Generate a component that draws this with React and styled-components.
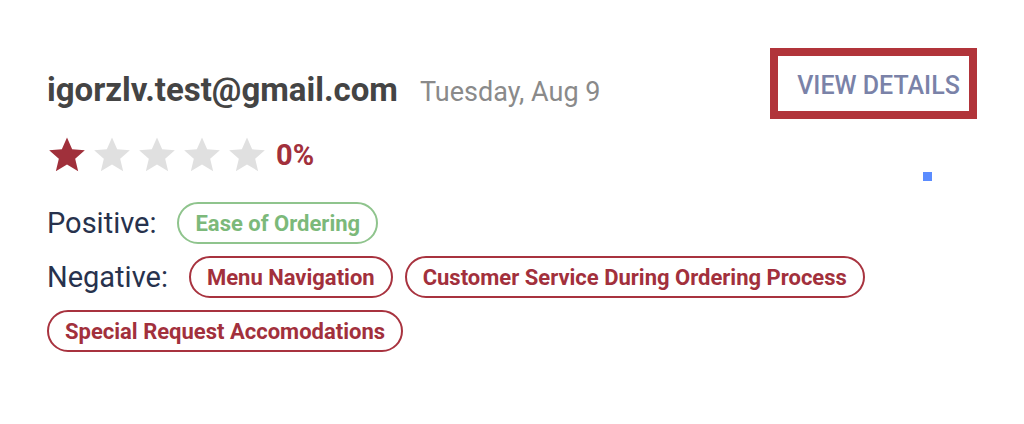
import React from "react"
import styled, { createGlobalStyle } from "styled-components"

const GlobalStyle = createGlobalStyle`
  body {
    margin: 0;
    background: #ffffff;
    font-family: Roboto, "Noto Sans", sans-serif;
  }
`

const Card = styled.div`
  position: relative;
  box-sizing: border-box;
  width: 1024px;
  height: 424px;
  padding: 48px 47px 0 47px;
`

const Header = styled.div`
  display: flex;
  align-items: center;
  justify-content: space-between;
`

const Title = styled.div`
  display: flex;
  align-items: baseline;
  gap: 22px;
  padding-top: 12px;
`

const Email = styled.span`
  font-size: 33px;
  font-weight: 700;
  color: #444444;
`

const DateText = styled.span`
  font-size: 27px;
  color: #8a8a8a;
`

const DetailsButton = styled.button`
  box-sizing: border-box;
  height: 71px;
  width: 207px;
  border: 8px solid #b1343a;
  background: #ffffff;
  padding: 3px 0 0 10px;
  font-family: Roboto, sans-serif;
  font-size: 25px;
  font-weight: 500;
  color: #7a82a8;
  text-transform: uppercase;
  cursor: pointer;
`

const Marker = styled.span`
  position: absolute;
  left: 923px;
  top: 172px;
  width: 9px;
  height: 9px;
  background: #5b8cff;
`

const RatingRow = styled.div`
  display: flex;
  align-items: center;
  margin-top: 16px;
`

const Stars = styled.div`
  display: flex;
  gap: 5px;
  margin-right: 9px;
`

const Percent = styled.span`
  font-size: 29px;
  font-weight: 700;
  color: #a2303c;
`

const TagGroup = styled.div`
  display: flex;
  flex-wrap: wrap;
  align-items: center;
  gap: 12px;
  margin-top: ${(p) => p.$top}px;
`

const Label = styled.span`
  font-size: 29px;
  color: #27324d;
  margin-right: ${(p) => p.$space}px;
`

const Tag = styled.span`
  box-sizing: border-box;
  display: inline-flex;
  align-items: center;
  height: 42px;
  padding: 0 16px;
  border-radius: 21px;
  border: 2px solid ${(p) => (p.$good ? "#8fc48d" : "#a8333f")};
  color: ${(p) => (p.$good ? "#7cb97a" : "#a2303c")};
  font-size: 22px;
  font-weight: 700;
`

const Star = ({ filled }) => (
  <svg width="40" height="40" viewBox="0 0 24 24">
    <path
      d="M12 1.5l3.1 7.1 7.6.6-5.8 5 1.8 7.5L12 17.7l-6.7 4 1.8-7.5-5.8-5 7.6-.6z"
      fill={filled ? "#a0303b" : "#e0e0e0"}
    />
  </svg>
)

const negatives = [
  "Menu Navigation",
  "Customer Service During Ordering Process",
  "Special Request Accomodations",
]

const App = () => (
  <>
    <GlobalStyle />
    <Card>
      <Header>
        <Title>
          <Email>igorzlv.test@gmail.com</Email>
          <DateText>Tuesday, Aug 9</DateText>
        </Title>
        <DetailsButton>View Details</DetailsButton>
      </Header>
      <Marker />
      <RatingRow>
        <Stars>
          {[0, 1, 2, 3, 4].map((i) => (
            <Star key={i} filled={i === 0} />
          ))}
        </Stars>
        <Percent>0%</Percent>
      </RatingRow>
      <TagGroup $top={27}>
        <Label $space={9}>Positive:</Label>
        <Tag $good>Ease of Ordering</Tag>
      </TagGroup>
      <TagGroup $top={12}>
        <Label $space={9}>Negative:</Label>
        {negatives.map((n) => (
          <Tag key={n}>{n}</Tag>
        ))}
      </TagGroup>
    </Card>
  </>
)

export default App
